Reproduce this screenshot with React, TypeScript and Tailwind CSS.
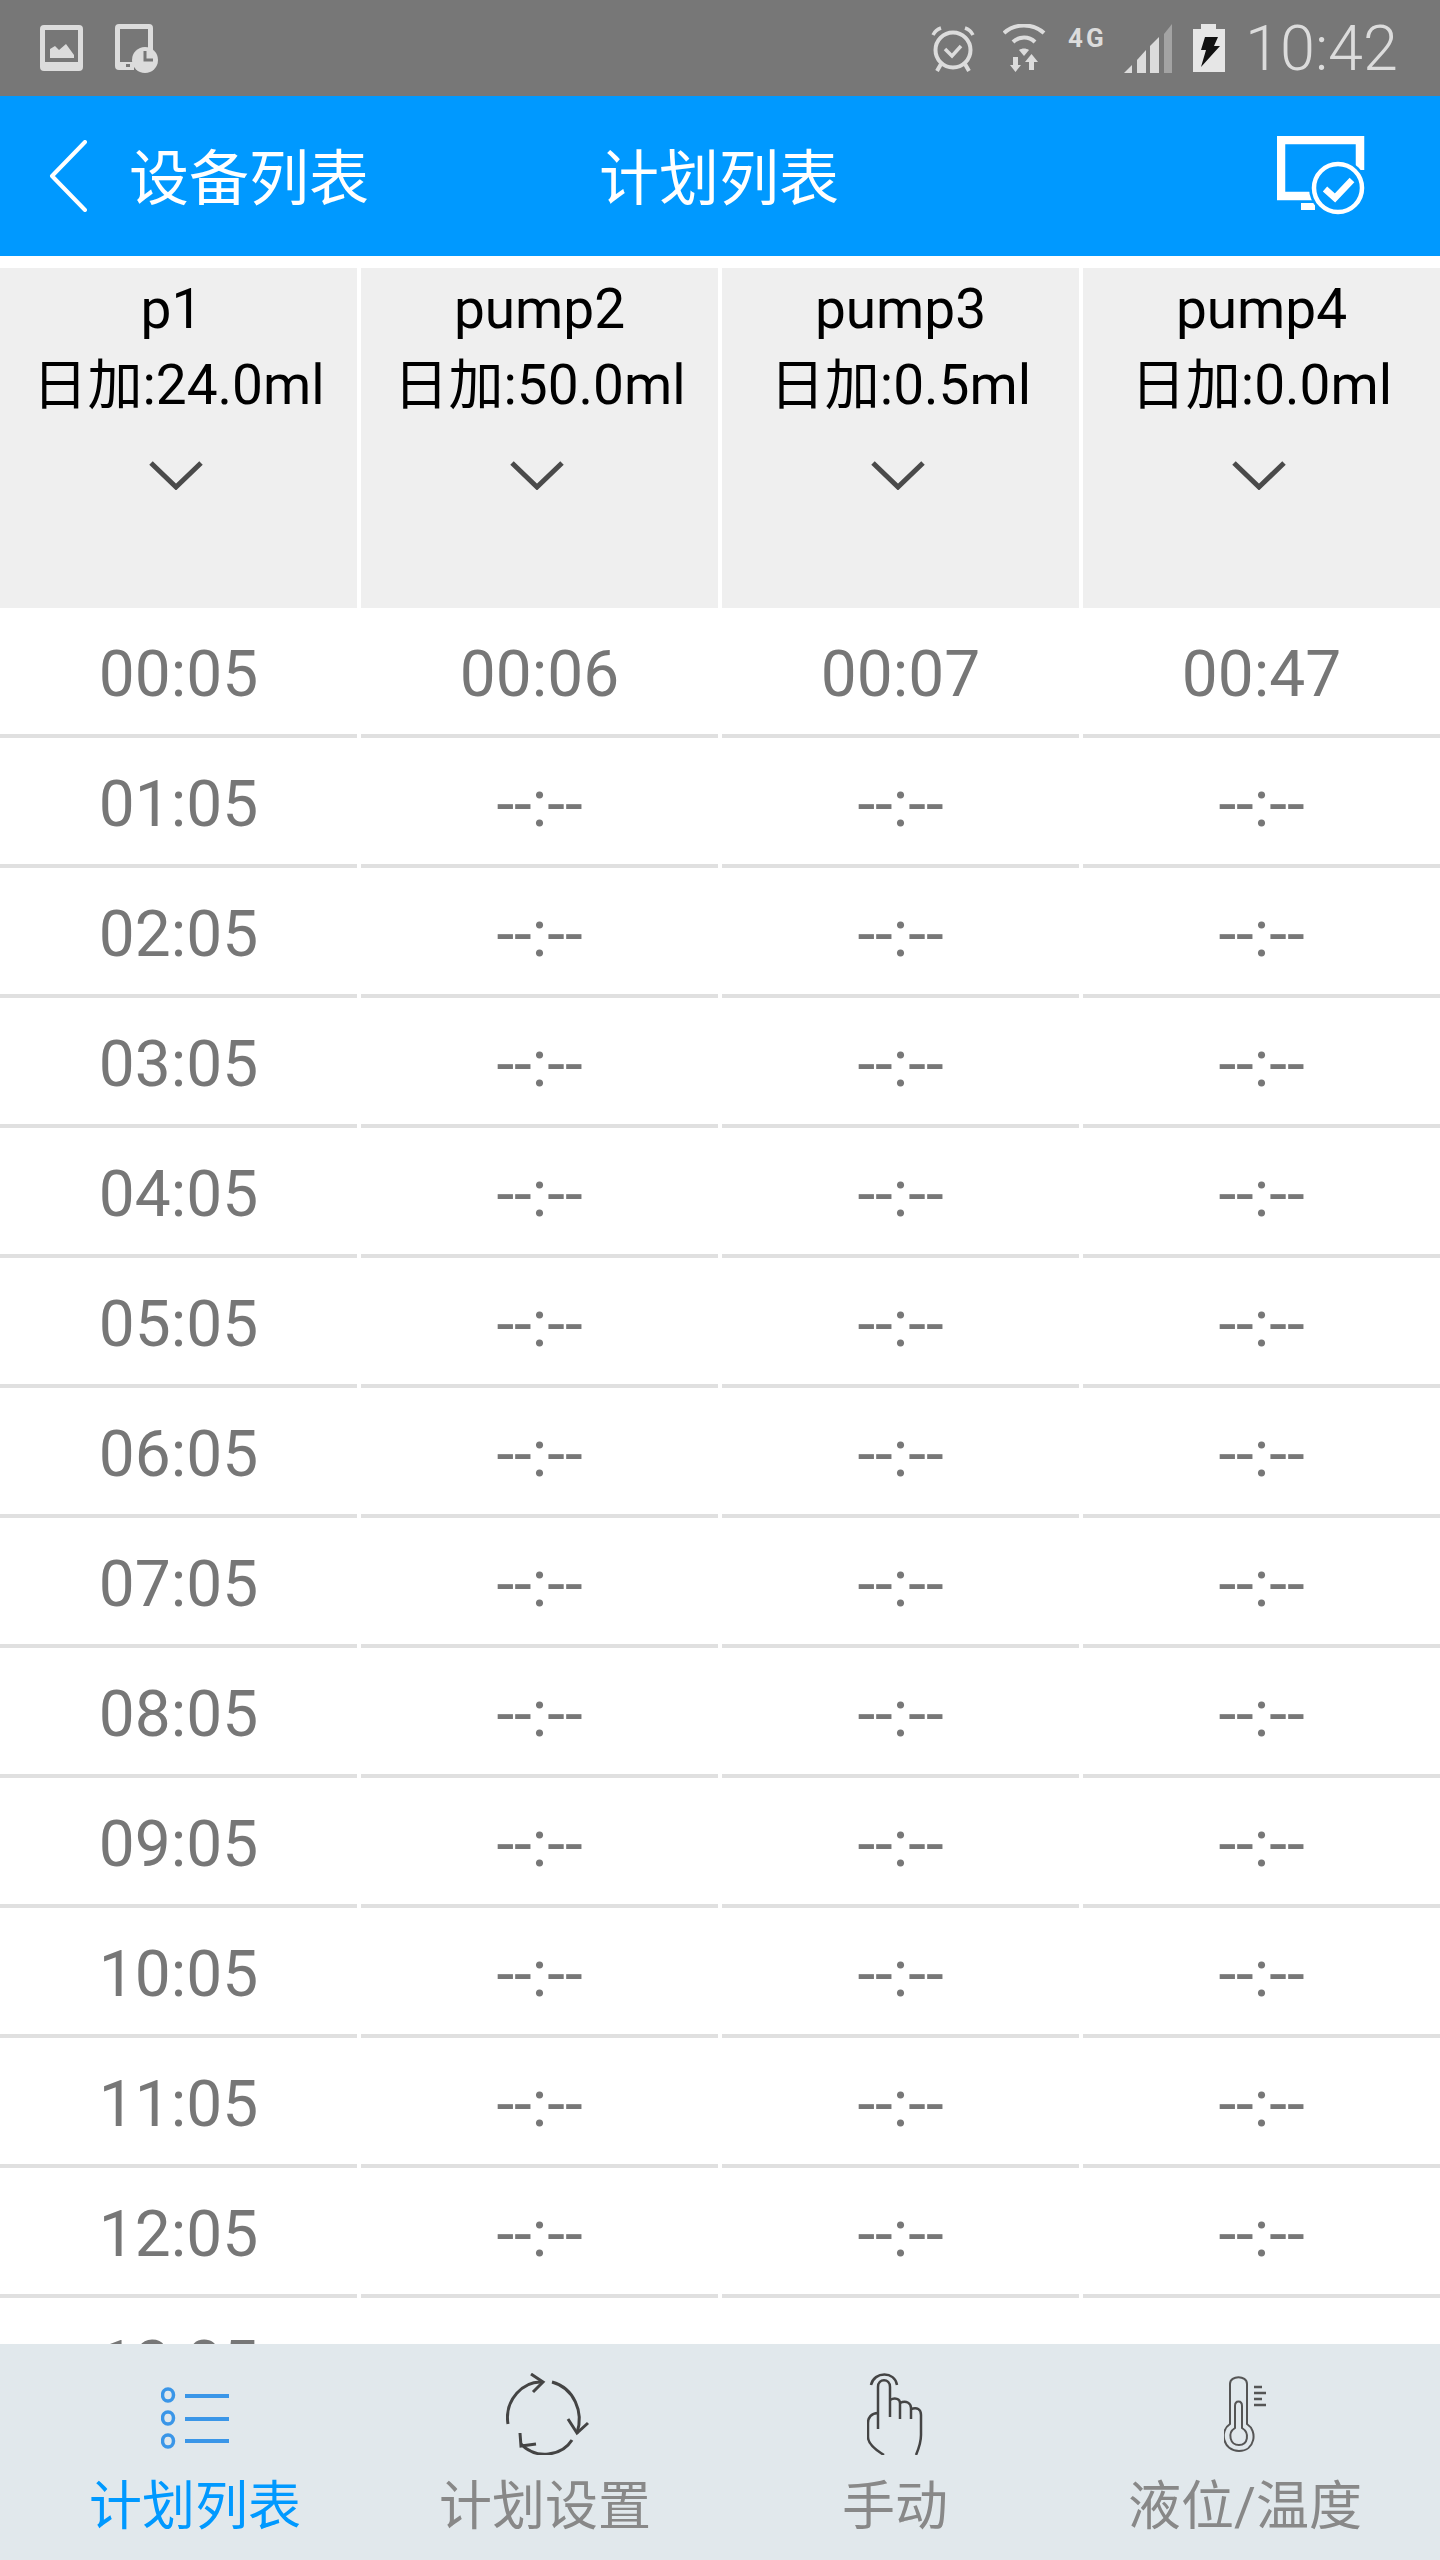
const font = 'font-["Roboto","Noto_Sans_CJK_SC",sans-serif]'

const pumps = [
  { name: 'p1', daily: '日加:24.0ml', first: '00:05', nameClass: 'pr-[14px]' },
  { name: 'pump2', daily: '日加:50.0ml', first: '00:06', nameClass: '' },
  { name: 'pump3', daily: '日加:0.5ml', first: '00:07', nameClass: '' },
  { name: 'pump4', daily: '日加:0.0ml', first: '00:47', nameClass: '' },
]

const firstColumn = ['00:05', '01:05', '02:05', '03:05', '04:05', '05:05', '06:05', '07:05', '08:05', '09:05', '10:05', '11:05', '12:05', '13:05']

function PictureIcon() {
  return (
    <svg width="43" height="46" viewBox="0 0 43 46" fill="none">
      <path
        fillRule="evenodd"
        d="M4 0h35a4 4 0 0 1 4 4v38a4 4 0 0 1-4 4H4a4 4 0 0 1-4-4V4a4 4 0 0 1 4-4zM5 5v32h33V5z"
        fill="#dcdcdc"
      />
      <path d="M10 33v-9l5-3 4 4 7-6 8 11v3z" fill="#dcdcdc" />
    </svg>
  )
}

function ScheduleIcon() {
  return (
    <svg width="44" height="49" viewBox="0 0 44 49" fill="none">
      <path d="M4 0h30a4 4 0 0 1 4 4v22h-5V5H5v33h14v8H4a4 4 0 0 1-4-4V4a4 4 0 0 1 4-4z" fill="#dcdcdc" />
      <path d="M11 40h4v3h-4z" fill="#777777" />
      <circle cx="30" cy="36" r="13" fill="#dcdcdc" />
      <path d="M30 27v9h8" stroke="#777777" strokeWidth="3" />
    </svg>
  )
}

function AlarmIcon() {
  return (
    <svg width="44" height="48" viewBox="0 0 44 48" fill="none" stroke="#dcdcdc">
      <circle cx="22" cy="26" r="17.5" strokeWidth="4" />
      <path d="M2 11C4 7 7 5 10 4M42 11c-2-4-5-6-8-7" strokeWidth="3.5" />
      <path d="M10 40 6 47M34 40l4 7" strokeWidth="4" />
      <path d="m14 25 7 7 9-10" strokeWidth="3.5" />
    </svg>
  )
}

function WifiIcon() {
  return (
    <svg width="43" height="48" viewBox="0 0 43 48" fill="none">
      <path d="M1 9C12-1 30-1 41 9" stroke="#dcdcdc" strokeWidth="4" />
      <path d="M10 18c6-6 16-6 22 0" stroke="#dcdcdc" strokeWidth="4" />
      <path d="m16 26 5 6 5-6c-3-2-7-2-10 0z" fill="#dcdcdc" />
      <path d="M10 33h5v8h3l-5.500 7L7 41h3z" fill="#dcdcdc" />
      <path d="M26 46v-8h-4l6.500-8 6.500 8h-4v8z" fill="#dcdcdc" />
    </svg>
  )
}

function SignalIcon() {
  return (
    <svg width="49" height="49" viewBox="0 0 49 49">
      <path d="M0 49 8 41v8z" fill="#dcdcdc" />
      <path d="M13 49V36l9-10v23z" fill="#dcdcdc" />
      <path d="M26 49V22l9-9v36z" fill="#dcdcdc" />
      <path d="M40 49V10l8-10v49z" fill="#a3a3a3" />
    </svg>
  )
}

function BatteryIcon() {
  return (
    <svg width="32" height="48" viewBox="0 0 32 48">
      <path d="M8 0h15v5h9v43H0V5h8z" fill="#e6e6e6" />
      <path d="M12 13h13l-4 9h6L8 43l5-17H8z" fill="#111111" />
    </svg>
  )
}

function StatusBar() {
  return (
    <div className="flex h-[96px] shrink-0 items-center justify-between bg-[#777777] pl-[40px] pr-[42px]">
      <div className="flex items-center gap-[32px]">
        <PictureIcon />
        <ScheduleIcon />
      </div>
      <div className="flex items-center">
        <AlarmIcon />
        <div className="ml-[28px]">
          <WifiIcon />
        </div>
        <span className='mb-[20px] ml-[22px] w-[37px] font-["Roboto"] text-[26px] leading-none font-bold tracking-[3px] text-[#dcdcdc]'>4G</span>
        <div className="ml-[19px]">
          <SignalIcon />
        </div>
        <div className="ml-[20px]">
          <BatteryIcon />
        </div>
        <span className='ml-[20px] font-["Roboto"] text-[63px] leading-none font-light text-[#dcdcdc]'>10:42</span>
      </div>
    </div>
  )
}

function TitleBar() {
  return (
    <div className="flex h-[160px] shrink-0 items-center bg-[#0099ff] text-white">
      <svg className="ml-[49px]" width="38" height="72" viewBox="0 0 38 72" fill="none">
        <path d="M36 2 3 36l33 34" stroke="#ffffff" strokeWidth="4" strokeLinecap="round" strokeLinejoin="round" />
      </svg>
      <span className="ml-[42px] w-[244px] pt-[8px] text-[60px] leading-none">设备列表</span>
      <span className="ml-[226px] w-[244px] pt-[8px] text-[60px] leading-none">计划列表</span>
      <svg className="ml-[434px]" width="88" height="80" viewBox="0 0 88 80" fill="none">
        <path d="M40 60H4V4h79v30" stroke="#ffffff" strokeWidth="8.500" />
        <path d="M24 67h14v7H24z" fill="#ffffff" />
        <circle cx="61" cy="52" r="29" fill="#0099ff" />
        <circle cx="61" cy="52" r="24" stroke="#ffffff" strokeWidth="4.500" />
        <path d="m48 53 10 9 17-18" stroke="#ffffff" strokeWidth="6.500" />
      </svg>
    </div>
  )
}

function PumpHeader() {
  return (
    <div className="mt-[12px] grid h-[340px] shrink-0 grid-cols-[357px_357px_357px_357px] gap-x-[4px]">
      {pumps.map((p) => (
        <div key={p.name} className="flex flex-col items-center bg-[#efefef] pt-[3px] text-black">
          <span className={`text-[55px] leading-[76px] ${p.nameClass}`}>{p.name}</span>
          <span className="text-[55px] leading-[76px] whitespace-nowrap">{p.daily}</span>
          <svg className="mt-[37px] mr-[6px]" width="54" height="30" viewBox="0 0 54 30" fill="none">
            <path d="m2 3 25 24L52 3" stroke="#4a4a4a" strokeWidth="5" />
          </svg>
        </div>
      ))}
    </div>
  )
}

function PlanRow({ index }: { index: number }) {
  return (
    <div className="grid h-[130px] shrink-0 grid-cols-[357px_357px_357px_357px] gap-x-[4px]">
      {pumps.map((p, col) => {
        const time = index === 0 ? p.first : col === 0 ? firstColumn[index] : '--:--'
        return (
          <div
            key={p.name}
            className="flex items-center justify-center border-b-[4px] border-[#e0e0e0] pt-[8px] text-[64px] leading-none text-[#777777]"
          >
            {time}
          </div>
        )
      })}
    </div>
  )
}

function ListTabIcon() {
  return (
    <svg className="mt-[7px]" width="68" height="62" viewBox="0 0 68 62" fill="none" stroke="#3a96e8">
      <ellipse cx="7" cy="8" rx="5.500" ry="6" strokeWidth="3.500" />
      <ellipse cx="7" cy="31" rx="5.500" ry="6" strokeWidth="3.500" />
      <ellipse cx="7" cy="54" rx="5.500" ry="6" strokeWidth="3.500" />
      <path d="M24 9h44M24 32h44M24 54h44" strokeWidth="4" />
    </svg>
  )
}

function CycleTabIcon() {
  return (
    <svg className="ml-[6px]" width="84" height="82" viewBox="0 0 84 82" fill="none" stroke="#444444" strokeWidth="3">
      <path d="M2 51C-2 26 18 8 36 9" />
      <path d="m25 1 12 8-10 10" />
      <path d="M46 9c22 6 32 30 25 51" />
      <path d="m62 46 9 14 11-10" />
      <path d="M66 67C56 83 30 87 15 71" />
      <path d="M14 60l1 13 15-2" />
    </svg>
  )
}

function HandTabIcon() {
  return (
    <svg width="56" height="82" viewBox="0 0 56 82" fill="none" stroke="#444444" strokeWidth="2.500">
      <path d="M4 12C7-2 28-2 30 12" />
      <path d="M11 56V14c0-9 12-9 12 0v30" />
      <path d="M23 27c5-3 10-1 10 3v16" />
      <path d="M33 30c6-3 11 0 11 5v11" />
      <path d="M44 36c6-2 10 0 10 6v20c0 6-2 13-5 20" />
      <path d="M11 40c-7 0-10 5-10 10v14c0 6 6 12 16 18" />
    </svg>
  )
}

function ThermoTabIcon() {
  return (
    <svg width="42" height="76" viewBox="0 0 42 76" fill="none" stroke="#555555" strokeWidth="2">
      <path d="M6 48V8c0-9 17-9 17 0v40c11 7 8 27-8 27S-5 55 6 48z" />
      <path d="M11 52V30c0-6 7-6 7 0v22c8 5 6 17-3 17s-12-12-4-17z" />
      <path d="M30 11h8M30 17h12M30 23h8M30 29h12" strokeWidth="2.500" />
    </svg>
  )
}

const tabs = [
  { label: '计划列表', icon: <ListTabIcon />, active: true },
  { label: '计划设置', icon: <CycleTabIcon />, active: false },
  { label: '手动', icon: <HandTabIcon />, active: false },
  { label: '液位/温度', icon: <ThermoTabIcon />, active: false },
]

function TabBar() {
  return (
    <div className="grid h-[216px] shrink-0 grid-cols-4 bg-[#e1e8ec] px-[20px]">
      {tabs.map((t) => (
        <div key={t.label} className="flex flex-col items-center">
          <div className="flex h-[133px] items-center justify-center pt-[7px]">{t.icon}</div>
          <span className={`text-[53px] leading-[60px] ${t.active ? 'text-[#0099ff]' : 'text-[#888888]'}`}>
            {t.label}
          </span>
        </div>
      ))}
    </div>
  )
}

export default function App() {
  return (
    <div className={`flex h-[2560px] w-[1440px] flex-col overflow-hidden bg-white ${font}`}>
      <StatusBar />
      <TitleBar />
      <PumpHeader />
      <div className="flex min-h-0 flex-1 flex-col overflow-hidden">
        {firstColumn.map((_, i) => (
          <PlanRow key={i} index={i} />
        ))}
      </div>
      <TabBar />
    </div>
  )
}
